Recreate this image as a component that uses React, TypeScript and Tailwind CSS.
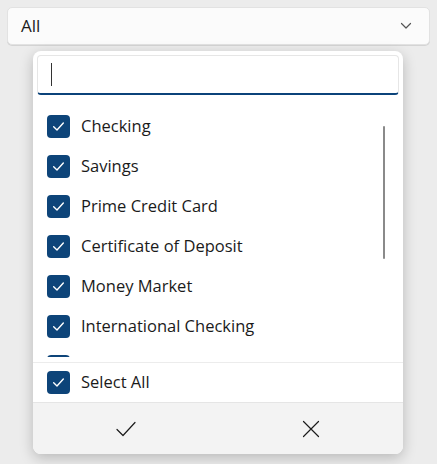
const items = [
  "Checking",
  "Savings",
  "Prime Credit Card",
  "Certificate of Deposit",
  "Money Market",
  "International Checking",
];

function Box() {
  return (
    <span className="flex h-[23px] w-[23px] shrink-0 items-center justify-center rounded-[4px] bg-[#0d4479]">
      <svg width="15" height="15" viewBox="0 0 14 14" fill="none">
        <path d="M2.5 7.3 L5.6 10.2 L11.5 3.8" stroke="white" strokeWidth="1.3" strokeLinecap="round" strokeLinejoin="round" />
      </svg>
    </span>
  );
}

export default function App() {
  return (
    <div
      className="relative h-[464px] w-[437px] overflow-hidden bg-[#ececec] pt-[7px] text-[#1b1b1b]"
      style={{ fontFamily: '"Open Sans", "Noto Sans", sans-serif' }}
    >
      {/* combobox */}
      <div className="mx-[7px] flex h-[38px] items-center justify-between rounded-[5px] border border-[#e2e2e2] bg-[#fbfbfb] pl-[13px] pr-[17px] shadow-[0_1px_0_#d4d4d4]">
        <span className="text-[17px]">All</span>
        <svg width="12" height="8" viewBox="0 0 12 8" fill="none">
          <path d="M1.5 1.5 L6 6 L10.5 1.5" stroke="#555" strokeWidth="1.2" strokeLinecap="round" strokeLinejoin="round" />
        </svg>
      </div>

      {/* popup */}
      <div className="absolute left-[33px] top-[51px] flex h-[403px] w-[370px] flex-col overflow-hidden rounded-[8px] bg-white shadow-[0_4px_14px_rgba(0,0,0,0.22)]">
        <div className="mx-[4px] mt-[4px] flex h-[40px] items-center rounded-[4px] border border-[#e6e6e6] border-b-2 border-b-[#0b437a] px-[13px]">
          <span className="h-[23px] w-px bg-[#333]" />
        </div>

        <div className="relative h-[262px] overflow-hidden pt-[11px]">
          {items.map((t) => (
            <div key={t} className="flex h-[40px] items-center gap-[11px] pl-[14px]">
              <Box />
              <span className="text-[16.5px]">{t}</span>
            </div>
          ))}
          {/* next row, scrolled out of view */}
          <div className="flex h-[40px] items-center pl-[14px]">
            <Box />
          </div>
          <div className="absolute left-[350px] top-[31px] h-[133px] w-[2px] rounded-full bg-[#8a8a8a]" />
        </div>

        <div className="mt-[5px] flex h-[40px] items-center gap-[11px] border-t border-[#ececec] pl-[14px]">
          <Box />
          <span className="text-[16.5px]">Select All</span>
        </div>

        <div className="grid flex-1 grid-cols-2 border-t border-[#e5e5e5] bg-[#f3f3f3]">
          <div className="flex items-center justify-center">
            <svg width="22" height="18" viewBox="0 0 22 18" fill="none">
              <path d="M2 9.5 L8 15.5 L20 2.5" stroke="#1b1b1b" strokeWidth="1.2" strokeLinecap="round" strokeLinejoin="round" />
            </svg>
          </div>
          <div className="flex items-center justify-center">
            <svg width="18" height="18" viewBox="0 0 18 18" fill="none">
              <path d="M1.5 1.5 L16.5 16.5 M16.5 1.5 L1.5 16.5" stroke="#1b1b1b" strokeWidth="1.2" strokeLinecap="round" />
            </svg>
          </div>
        </div>
      </div>
    </div>
  );
}
